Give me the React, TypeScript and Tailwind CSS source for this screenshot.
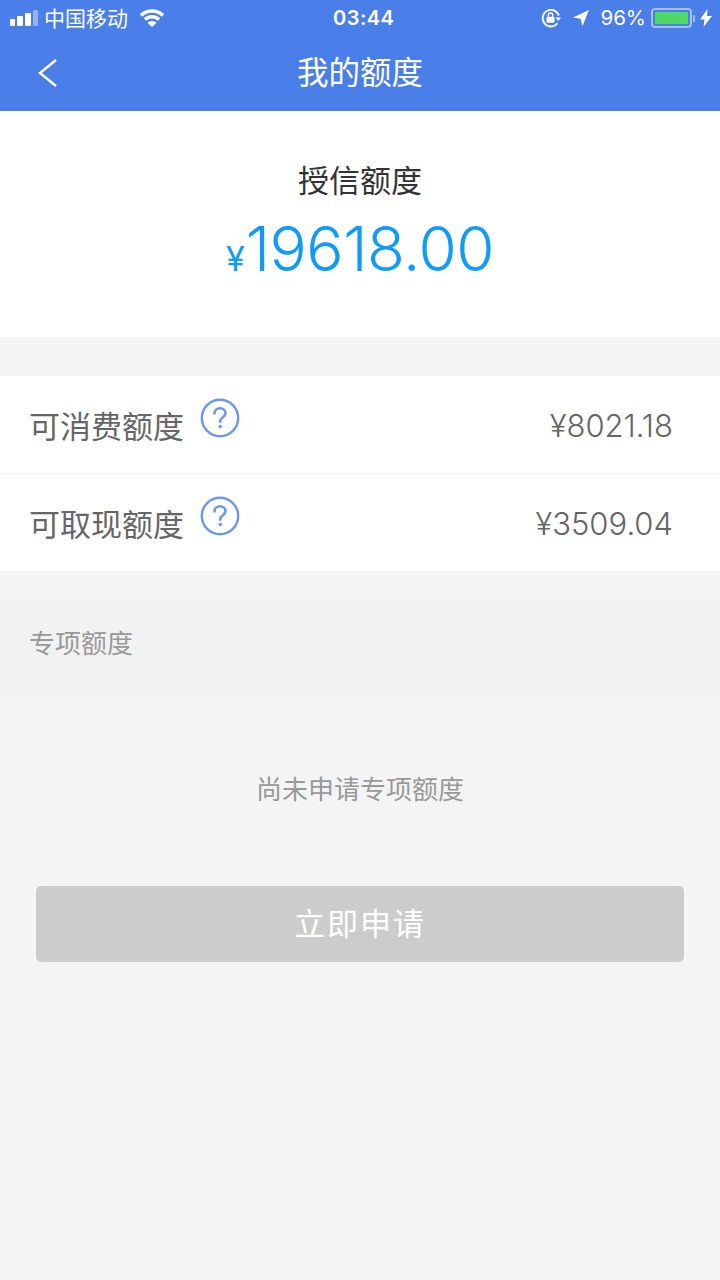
const FONT = "font-['Inter','Noto_Sans_CJK_SC',sans-serif]";

const QuestionIcon = () => (
  <svg width="40" height="40" viewBox="0 0 40 40" fill="none" className="ml-[16px] -mt-[14px]">
    <circle cx="20" cy="20" r="18.2" stroke="#6b98ee" strokeWidth="2.400" />
    <path d="M14.500 15.500c0-3.200 2.400-5.200 5.500-5.200s5.500 2 5.500 4.800c0 2-1.100 3.100-2.600 4.200-1.700 1.200-2.700 2-2.700 4.400" stroke="#6b98ee" strokeWidth="2.600" strokeLinecap="round" />
    <circle cx="20.200" cy="28.500" r="1.700" fill="#6b98ee" />
  </svg>
);

const StatusBar = () => (
  <div className="h-[36px] flex items-center relative text-white">
    <div className="flex items-end gap-[2px] ml-[10px] h-[17px] pb-[1px]">
      <div className="w-[5px] h-[7px] bg-white rounded-[1px]" />
      <div className="w-[6px] h-[10px] bg-white rounded-[1px]" />
      <div className="w-[6px] h-[13px] bg-white rounded-[1px]" />
      <div className="w-[5px] h-[16px] bg-white/40 rounded-[1px]" />
    </div>
    <span className="ml-[6px] text-[21px] leading-none">中国移动</span>
    <svg width="26" height="20" viewBox="0 0 26 20" className="ml-[11px] -mt-[1px]" fill="none" stroke="#fff" strokeWidth="3.400">
      <path d="M2 7.500C8 1.500 18 1.500 24 7.500" />
      <path d="M6 11.500C10 7.800 16 7.800 20 11.500" />
      <path d="M13 19l-4.500-4.300C11 12.500 15 12.500 17.500 14.700z" fill="#fff" stroke="none" />
    </svg>
    <span className="absolute left-[333px] top-[6px] text-[20px] leading-[24px] font-semibold tracking-[0.5px]">03:44</span>
    <div className="ml-auto flex items-center h-full">
      <svg width="20" height="20" viewBox="0 0 20 20" fill="none" className="mr-[11px]">
        <path d="M17.800 7.500A8.300 8.300 0 1 0 16.500 15.300" stroke="#fff" strokeWidth="1.800" />
        <path d="M14.500 9.500h5.500l-2.700 3.500z" fill="#fff" />
        <rect x="5.500" y="8.800" width="8" height="6" rx="1" fill="#fff" />
        <path d="M7.300 8.800V7.200a2.200 2.200 0 0 1 4.400 0v1.600" stroke="#fff" strokeWidth="1.300" />
      </svg>
      <svg width="18" height="18" viewBox="0 0 18 18" className="mr-[10px]">
        <path d="M17 1 1 8.500l7.500 1.200L10.500 17z" fill="#fff" />
      </svg>
      <span className="text-[20.500px] leading-none mr-[5px]">96%</span>
      <div className="w-[41px] h-[20px] border-2 border-white/50 rounded-[4px] p-[2px]">
        <div className="w-full h-full bg-[#4cd964] rounded-[1px]" />
      </div>
      <div className="w-[2px] h-[7px] bg-white/50 ml-[1px] rounded-r-[1px]" />
      <svg width="12" height="18" viewBox="0 0 12 18" className="ml-[5px] mr-[8px]">
        <path d="M7.500 0 0 10.500h4.500L3.500 18 12 7H7z" fill="#fff" />
      </svg>
    </div>
  </div>
);

const QuotaRow = ({ label, value, border }: { label: string; value: string; border?: boolean }) => (
  <div className={`bg-white flex items-center pl-[29px] pr-[47px] ${border ? 'h-[98px] border-b border-[#f4f4f4]' : 'h-[97px]'}`}>
    <span className="text-[31px] leading-none text-[#666] mt-[3px]">{label}</span>
    <QuestionIcon />
    <span className="ml-auto text-[31px] leading-none text-[#666] mt-[2px] font-[350]">{value}</span>
  </div>
);

export default function App() {
  return (
    <div className={`w-[720px] h-[1280px] bg-[#f4f4f4] flex flex-col overflow-hidden ${FONT}`}>
      <header className="h-[111px] bg-[#4a7fe9] shrink-0">
        <StatusBar />
        <div className="h-[75px] flex items-center justify-center relative">
          <svg width="20" height="30" viewBox="0 0 20 30" fill="none" className="absolute left-[38px] top-[22px]">
            <path d="M18 2 2 15l16 13" stroke="#fff" strokeWidth="2.400" />
          </svg>
          <span className="text-[31.500px] leading-none text-white -mt-[2px]">我的额度</span>
        </div>
      </header>

      <section className="h-[226px] bg-white flex flex-col items-center shrink-0">
        <p className="mt-[52px] text-[31px] leading-[36px] text-[#333]">授信额度</p>
        <p className="mt-[14px] flex items-baseline text-[#0f9cf8] leading-none">
          <span className="text-[34px] mr-[1px]">¥</span>
          <span className="text-[62px] leading-[72px] tracking-[-0.5px] font-light">19618.00</span>
        </p>
      </section>

      <div className="mt-[39px] shrink-0">
        <QuotaRow label="可消费额度" value="¥8021.18" border />
        <QuotaRow label="可取现额度" value="¥3509.04" />
      </div>

      <div className="mt-[26px] h-[96px] bg-[#f2f2f2] flex items-center pl-[29px] shrink-0">
        <span className="text-[26px] leading-none text-[#999] -mt-[2px]">专项额度</span>
      </div>

      <p className="mt-[82px] text-center text-[26px] leading-[30px] text-[#999]">尚未申请专项额度</p>

      <button className="mt-[81px] mx-[36px] h-[76px] bg-[#cccccc] rounded-[5px] text-white text-[31px] tracking-[2px]">立即申请</button>
    </div>
  );
}
